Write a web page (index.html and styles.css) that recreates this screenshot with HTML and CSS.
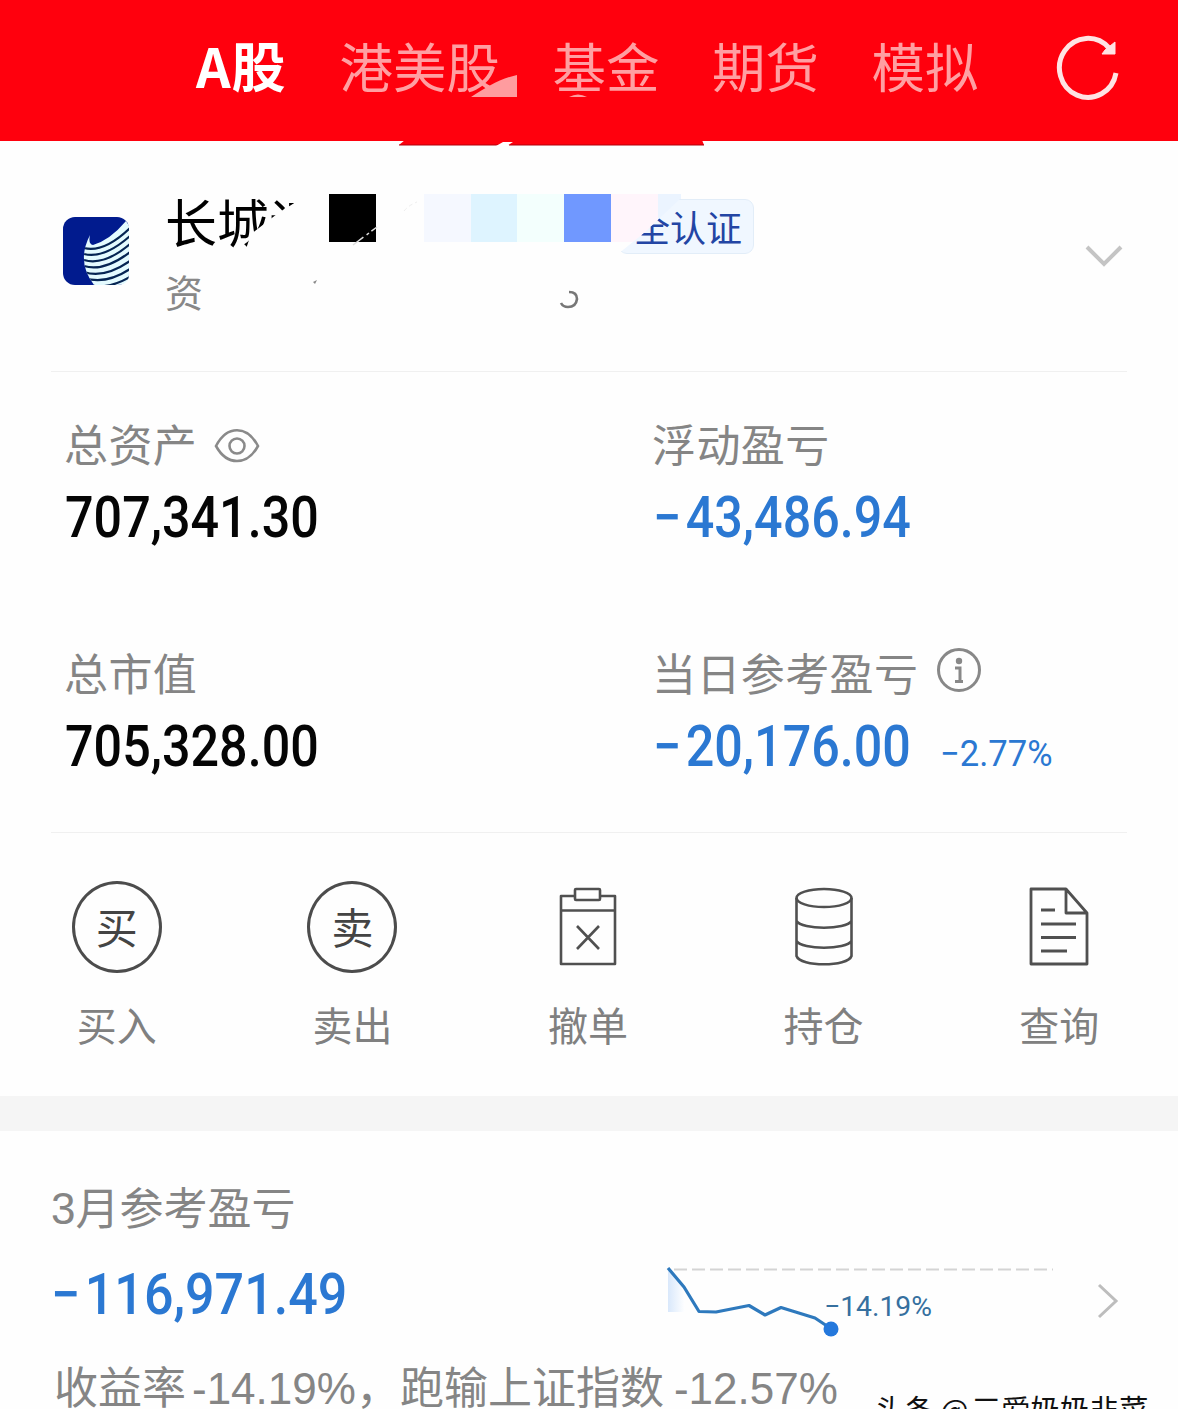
FILE: index.html
```html
<!DOCTYPE html>
<html lang="zh-CN">
<head>
<meta charset="utf-8">
<title>A股交易</title>
<link rel="stylesheet" href="styles.css">
</head>
<body>
<main class="screen">
  <header class="topbar">
    <nav class="tabs">
      <a class="tab active">A股</a>
      <a class="tab">港美股</a>
      <a class="tab">基金</a>
      <a class="tab">期货</a>
      <a class="tab">模拟</a>
    </nav>
    <svg class="refresh" viewBox="0 0 68 68" width="68" height="68">
      <path d="M61 39A28.500 29.500 0 1 1 54 14" fill="none" stroke="#ffe3e3" stroke-width="5"/>
      <path d="M60 8V20H47L50 16Z" fill="#ffe3e3" stroke="#ffe3e3"/>
    </svg>
    <svg class="topbar-marks" viewBox="0 0 1178 147" width="1178" height="147">
      <path d="M471 97C487 87 499 79 517 75V97Z" fill="#ff9c9f"/>
      <path d="M569 97Q578 92 587 97Z" fill="#ff9c9f"/>
      <path d="M405 140H702L704 145H399Z" fill="#ff000d"/>
      <path d="M399 145H498M509 145H704" stroke="#b0000d" stroke-width="1"/>
      <path d="M496 146L503 142H513L507 146Z" fill="#fff"/>
    </svg>
  </header>

  <section class="account">
    <svg class="logo" viewBox="0 0 68 70" width="68" height="70">
      <defs><clipPath id="wing"><path d="M28 19Q26 28 31 29Q48 24 64 5L67 10V58Q67 69 55 69H32Q14 46 28 19Z"/></clipPath></defs>
      <rect x="1" y="1" width="66" height="68" rx="12" fill="#011b8e"/>
      <g clip-path="url(#wing)">
        <rect x="18" y="0" width="50" height="70" fill="#e4fbff"/>
        <g fill="none" stroke="#062553" stroke-width="2.200">
          <path d="M22 32Q42 37 68 12"/><path d="M22 38Q42 43 68 20"/><path d="M22 44Q42 50 68 28"/><path d="M22 50Q42 56 68 36"/><path d="M22 56Q42 63 68 45"/><path d="M22 62Q44 69 68 53"/><path d="M24 68Q44 75 68 61"/>
        </g>
      </g>
    </svg>
    <div class="account-text">
      <div class="account-name">长城证</div>
      <div class="account-id">资</div>
    </div>
    <div class="mosaic">
      <i class="c1"></i><i class="c2"></i><i class="c3"></i><i class="c4"></i><i class="c5"></i><i class="c6"></i><i class="c7"></i>
    </div>
    <div class="badge"><span>全认证</span></div>
    <svg class="fragments" viewBox="0 0 420 140" width="420" height="140">
      <path d="M182 64L206 46" stroke="#ddd" stroke-width="1.500" stroke-dasharray="13 4 3 3"/>
      <path d="M142 101l4-2-2 4z" fill="#888"/>
      <path d="M233 30Q238 24 246 21" fill="none" stroke="#eee" stroke-dasharray="4 3"/>
      <path d="M398 111Q406 111 406 118Q405 126 397 126Q392 126 390 122" fill="none" stroke="#777" stroke-width="2.600"/>
    </svg>
    <svg class="chevron-down" viewBox="0 0 40 26" width="40" height="26"><path d="M3 4L20 21L37 4" fill="none" stroke="#c4c4c4" stroke-width="4"/></svg>
  </section>

  <section class="assets">
    <div class="cell">
      <div class="label">总资产
        <svg class="eye" viewBox="0 0 46 36" width="46" height="36" fill="none" stroke="#8a8a8a" stroke-width="2.600"><path d="M2 18C13-3 33-3 44 18C33 38 13 38 2 18Z"/><circle cx="23" cy="18" r="7.500"/></svg>
      </div>
      <div class="value"><span>707,341.30</span></div>
    </div>
    <div class="cell">
      <div class="label">浮动盈亏</div>
      <div class="value loss"><span><em>−</em>43,486.94</span></div>
    </div>
    <div class="cell">
      <div class="label">总市值</div>
      <div class="value"><span>705,328.00</span></div>
    </div>
    <div class="cell">
      <div class="label">当日参考盈亏
        <svg class="info" viewBox="0 0 46 46" width="46" height="46"><circle cx="23" cy="23" r="20.500" fill="none" stroke="#888" stroke-width="3"/><circle cx="23" cy="14" r="3.200" fill="#888"/><path d="M19 21H24V34M19 34.500H27" fill="none" stroke="#888" stroke-width="3"/></svg>
      </div>
      <div class="value loss"><span><em>−</em>20,176.00</span><small>−2.77%</small></div>
    </div>
  </section>

  <nav class="actions">
    <a class="action"><span class="icon"><b class="ring">买</b></span>买入</a>
    <a class="action"><span class="icon"><b class="ring">卖</b></span>卖出</a>
    <a class="action"><span class="icon"><svg viewBox="0 0 60 80" width="60" height="80" fill="none" stroke="#505050" stroke-width="2.600" stroke-linejoin="round"><path d="M17 9H3V77H57V9H43M3 23.500H57"/><rect x="17" y="2" width="25" height="11" rx="1"/><path d="M19 39L41 62M41 39L19 62"/></svg></span>撤单</a>
    <a class="action"><span class="icon"><svg viewBox="0 0 60 80" width="60" height="80" fill="none" stroke="#505050" stroke-width="2.600"><ellipse cx="30" cy="11" rx="27.500" ry="9"/><path d="M2.500 11V69C6 80 54 80 57.500 69V11M2.500 34C8 43 52 43 57.500 34M2.500 54C8 63 52 63 57.500 54"/></svg></span>持仓</a>
    <a class="action"><span class="icon"><svg viewBox="0 0 60 80" width="60" height="80" fill="none" stroke="#505050" stroke-width="2.800" stroke-linejoin="round"><path d="M2 2H37L58 26V77H2ZM37 2V26H58M12 23H26M12 37H47M12 50.500H47M12 64H38"/></svg></span>查询</a>
  </nav>

  <div class="spacer"></div>

  <section class="month">
    <div class="month-title"><span class="latin">3</span>月参考盈亏</div>
    <div class="month-row">
      <div class="value loss"><span><em>−</em>116,971.49</span></div>
      <svg class="trend" viewBox="0 0 400 90" width="400" height="90">
        <defs><linearGradient id="fade" x1="0" y1="0" x2="1" y2="0"><stop offset="0" stop-color="#d9e8fb"/><stop offset="1" stop-color="#fff"/></linearGradient></defs>
        <path d="M8 14L25 36V57H8Z" fill="url(#fade)"/>
        <path d="M14 14.500H393" stroke="#d4d4d4" stroke-width="2" stroke-dasharray="13 5"/>
        <path d="M8 13L24 32L39 56.500L56 57L89 50.500L105 60L121 52.500L155 63L170 73" fill="none" stroke="#2e79bd" stroke-width="3.200" stroke-linejoin="round"/>
        <circle cx="171" cy="74" r="7.500" fill="#2478dc"/>
        <text x="164" y="60.500" class="trend-rate" textLength="108" lengthAdjust="spacingAndGlyphs">−14.19%</text>
      </svg>
      <svg class="chevron-right" viewBox="0 0 24 40" width="24" height="40"><path d="M3 4L20 20L3 36" fill="none" stroke="#bdbdbd" stroke-width="3"/></svg>
    </div>
    <div class="month-summary">收益率<span class="latin rate">-14.19%</span>，<span class="second">跑输上证指数</span><span class="latin rate2">-12.57%</span></div>
  </section>
  <div class="watermark">头条 <span>@</span>三爱奶奶韭菜</div>
</main>
</body>
</html>
```
FILE: styles.css
```css
* { box-sizing: border-box; }

body {
  margin: 0;
  background: #fff;
  font-family: "Noto Sans CJK SC", "Noto Sans", sans-serif;
}

.screen {
  position: relative;
  width: 1178px;
  height: 1409px;
  overflow: hidden;
  background: #fefefe;
}

.topbar {
  position: relative;
  display: flex;
  justify-content: space-between;
  height: 141px;
  padding: 0 55px 0 196px;
  background: #ff000d;
}
.tabs { display: flex; gap: 52.500px; padding-top: 27px; }
.tab {
  font-size: 53.500px;
  line-height: 76px;
  color: #ff9fa2;
  white-space: nowrap;
}
.tab.active { font-weight: 700; color: #fff; width: 91px; font-size: 54px; letter-spacing: 1px; }
.refresh { margin-top: 34px; }
.topbar-marks { position: absolute; left: 0; top: 0; }

.account {
  position: relative;
  display: flex;
  height: 231px;
  margin: 0 51px;
  padding: 75px 0 0 11px;
  border-bottom: 1px solid #f0f0f0;
}
.account-text { margin: -28px 0 0 35px; }
.account-name {
  font-size: 52px;
  line-height: 66px;
  color: #000;
  height: 71px;
  clip-path: polygon(0 0, 134px 0, 134px 12px, 112px 26px, 86px 46px, 78px 70px, 0 70px);
}
.account-id { font-size: 38px; line-height: 63px; color: #888; }
.mosaic { position: absolute; left: 278px; top: 53px; display: flex; }
.mosaic i { width: 46.800px; height: 48px; }
.mosaic .c1 { background: #000; margin-right: 48px; }
.c2 { background: #f5f8ff; }
.c3 { background: #def4ff; }
.c4 { background: #f3fffd; }
.c5 { background: #7098ff; }
.c6 { background: #fff5fb; }
.mosaic .c7 { width: 23px; background: #ebf4ff; }
.badge {
  position: absolute;
  left: 567px;
  top: 58px;
  width: 136px;
  height: 55px;
  padding: 0 11px;
  text-align: right;
  border: 1px solid #e2edf8;
  border-radius: 9px;
  background: #f0f7ff;
  clip-path: polygon(62px 0, 100% 0, 100% 100%, 0 100%, 26px 34px);
}
.badge span { font-size: 36px; line-height: 52px; color: #2345a4; }
.fragments { position: absolute; left: 120px; top: 40px; }
.chevron-down { margin: 27px 3px 0 auto; }

.assets {
  display: grid;
  grid-template-columns: 588px 1fr;
  grid-template-rows: 229px 231px;
  margin: 0 51px;
  padding-left: 13px;
  border-bottom: 1px solid #f0f0f0;
}
.cell { padding-top: 39px; }
.label {
  display: flex;
  align-items: center;
  height: 64px;
  font-size: 44px;
  letter-spacing: .4px;
  color: #858585;
}
.eye { margin: 6px 0 0 17px; }
.info { margin: -5px 0 0 18px; }
.value {
  display: flex;
  align-items: baseline;
  height: 84px;
  font: 500 57px/86px Roboto, sans-serif;
  color: #050505;
  white-space: nowrap;
}
.value span { margin-left: 1px; transform: scaleX(.882); transform-origin: 0 50%; }
.value em { font-style: normal; margin-right: 5px; }
.value.loss { color: #2b78d2; }
.value small { margin-left: -5px; font-size: 36px; font-weight: 400; transform: scaleX(.96); transform-origin: 0 50%; }

.actions { display: flex; width: 1178px; height: 263px; padding-top: 47px; }
.action {
  position: relative;
  left: -1px;
  flex: 1;
  display: flex;
  flex-direction: column;
  align-items: center;
  font-size: 40px;
  line-height: 60px;
  color: #808080;
}
.action .icon { display: flex; align-items: center; height: 94px; margin-bottom: 20px; }
.ring {
  width: 90px;
  height: 92px;
  border: 3px solid #4c4c4c;
  border-radius: 50%;
  font-size: 42px;
  font-weight: 400;
  line-height: 83px;
  text-align: center;
  color: #444;
}

.spacer { height: 35px; background: #f5f5f5; }

.month { padding: 43px 51px 0; }
.month-title { font-size: 44px; line-height: 64px; color: #858585; }
.month-title .latin { position: relative; top: -1px; }
.latin { font-family: "Liberation Sans", Arial, sans-serif; line-height: 1; }
.month-row { display: flex; height: 110px; }
.month-row .value { width: 609px; height: 110px; line-height: 114px; }
.month-row .value span { margin-left: 0; transform: scaleX(.912); }
.trend { margin-top: 17px; }
.trend-rate { font: 400 28px Roboto, sans-serif; fill: #36709f; }
.chevron-right { margin: 43px 7px 0 auto; }
.month-summary {
  display: flex;
  align-items: baseline;
  padding-left: 3px;
  font-size: 44px;
  line-height: 74px;
  color: #858585;
  white-space: nowrap;
}
.rate { margin-left: 6px; }
.rate2 { margin-left: 10px; }
.watermark {
  position: absolute;
  left: 875px;
  top: 1387px;
  font-size: 29.500px;
  line-height: 42px;
  color: #111;
  white-space: nowrap;
}
.watermark span { margin-right: 3px; }
```
